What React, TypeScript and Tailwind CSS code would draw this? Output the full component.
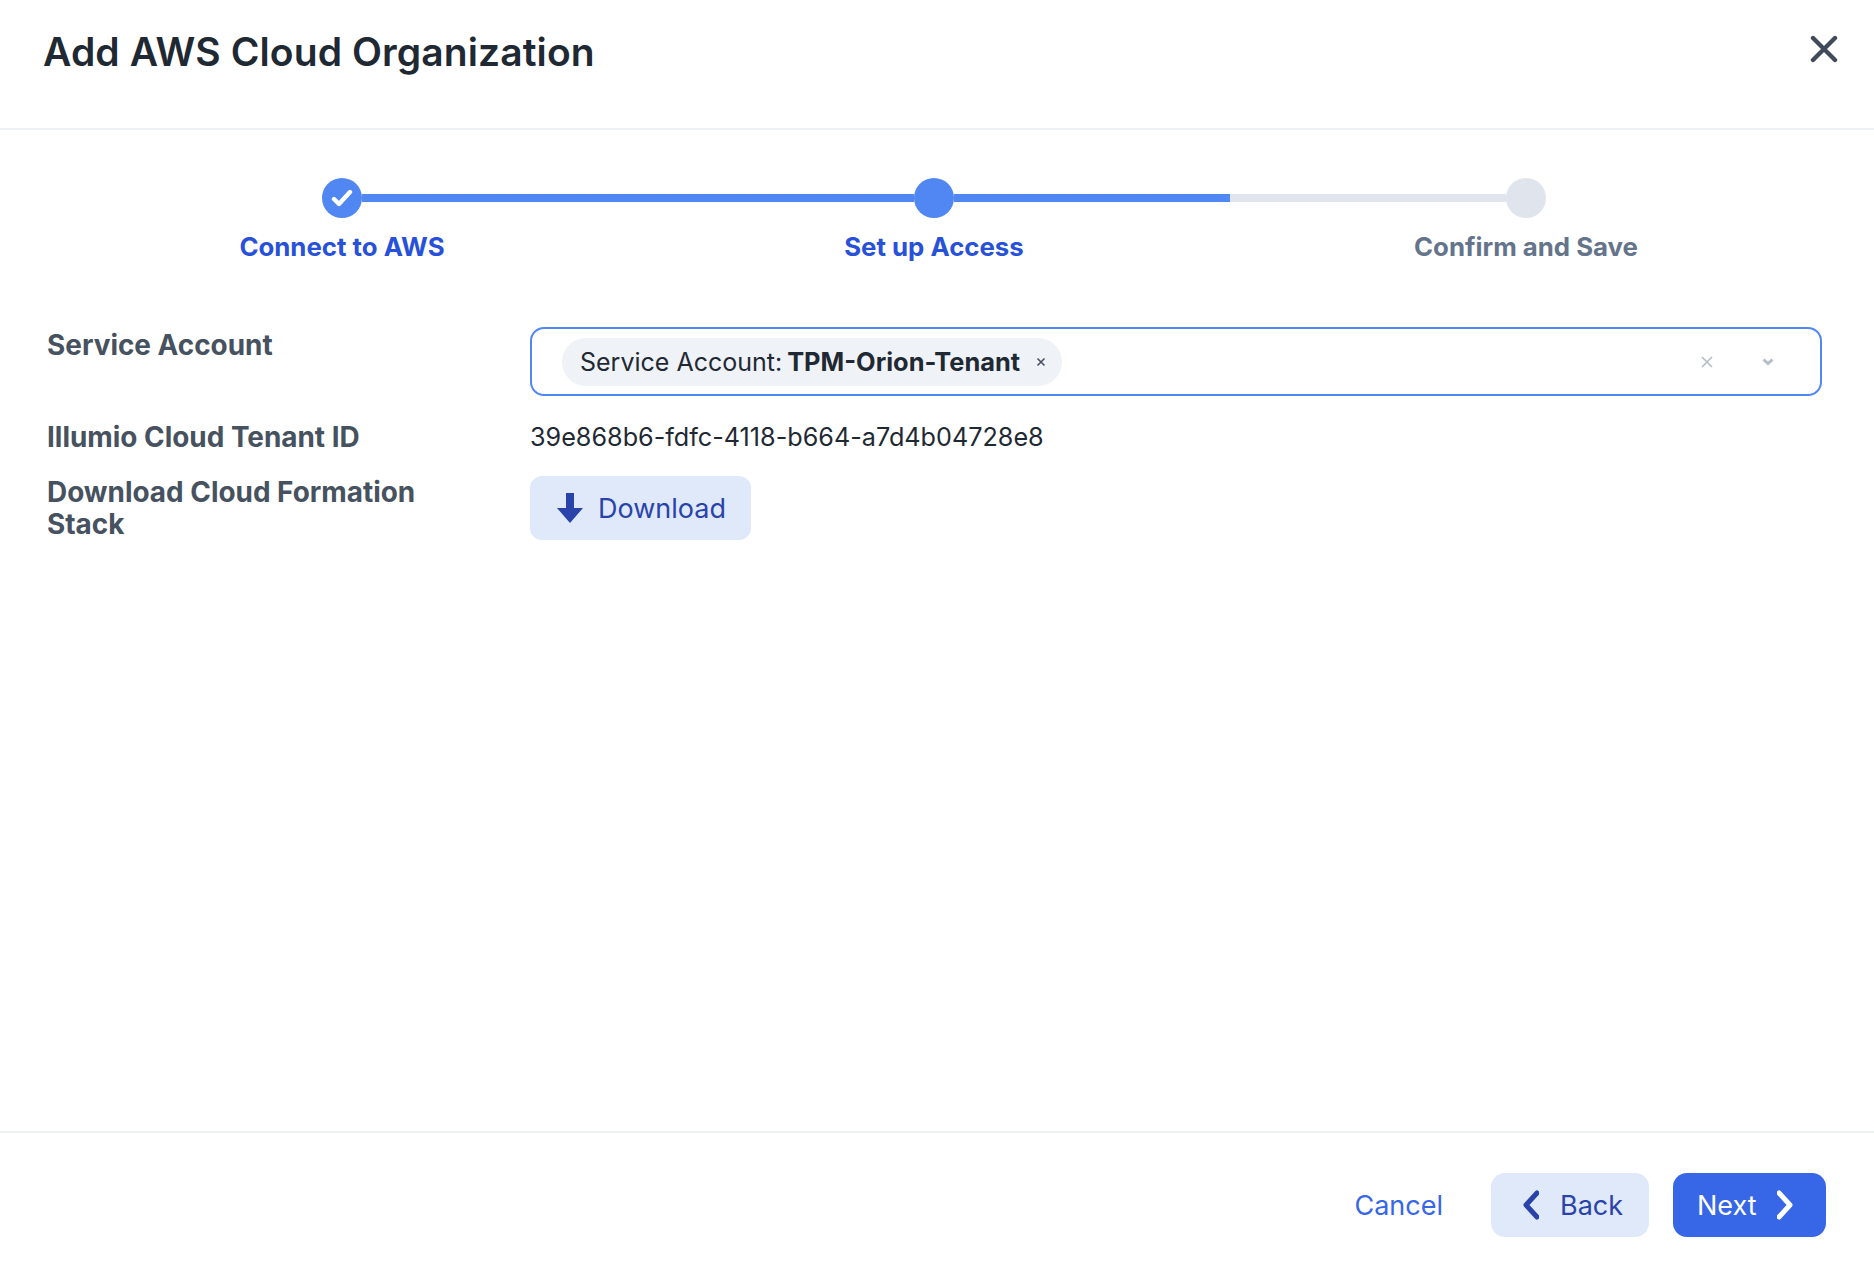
export default function App() {
  return (
    <div className="flex h-[1264px] w-full flex-col bg-white font-['Inter',sans-serif]">
      <header className="flex h-[130px] shrink-0 items-start justify-between border-b-2 border-[#edf0f4] pl-[43px] pr-[36px]">
        <h1 className="mt-[29px] text-[39px] leading-[46px] font-semibold tracking-[0.1px] text-[#1f2933]">Add AWS Cloud Organization</h1>
        <button className="mt-[35px] text-[#3f4b5b]">
          <svg width="28" height="28" viewBox="0 0 28 28" fill="none" stroke="currentColor" strokeWidth="4.4" strokeLinecap="round">
            <path d="M3 3 L25 25 M25 3 L3 25" />
          </svg>
        </button>
      </header>

      <section className="mt-[48px] pl-[46px]">
        <div className="flex items-center pl-[276px]">
          <div className="flex h-10 w-10 items-center justify-center rounded-full bg-[#5087f2]">
            <svg width="22" height="18" viewBox="0 0 22 18" fill="none" stroke="white" strokeWidth="4.4" strokeLinecap="round" strokeLinejoin="round">
              <path d="M3 10 L8 15 L19 3" />
            </svg>
          </div>
          <div className="h-2 w-[552px] bg-[#5087f2]" />
          <div className="h-10 w-10 rounded-full bg-[#5087f2]" />
          <div className="h-2 w-[276px] bg-[#5087f2]" />
          <div className="h-2 w-[276px] bg-[#e0e4ec]" />
          <div className="h-10 w-10 rounded-full bg-[#e0e4ec]" />
        </div>
        <div className="mt-[13px] grid w-[1776px] grid-cols-3 text-center text-[25.8px] leading-[32px] font-bold">
          <div className="text-[#2851d9]">Connect to AWS</div>
          <div className="text-[#2851d9]">Set up Access</div>
          <div className="text-[#64748b]">Confirm and Save</div>
        </div>
      </section>

      <section className="mt-[64px] grid grid-cols-[483px_1292px] items-start pl-[47px] text-[27.9px] leading-[32px]">
        <div className="pt-[2px] font-bold text-[#475260]">Service Account</div>
        <div className="flex h-[69px] items-center rounded-[14px] border-2 border-[#5087f2] pl-[30px] pr-[46px]">
          <div className="flex h-12 items-center rounded-full bg-[#eff2f6] pl-[18px] pr-[16px] text-[25px] text-[#1f2933]">
            <span>Service Account:</span>
            <span className="ml-[5px] text-[25.4px] font-bold">TPM-Orion-Tenant</span>
            <svg className="ml-[16px]" width="10" height="10" viewBox="0 0 10 10" fill="none" stroke="#475260" strokeWidth="1.6">
              <path d="M1.5 1.5 L8.5 8.5 M8.5 1.5 L1.5 8.5" />
            </svg>
          </div>
          <div className="flex-1" />
          <svg width="12" height="12" viewBox="0 0 12 12" fill="none" stroke="#b4bdc9" strokeWidth="1.6">
            <path d="M1 1 L11 11 M11 1 L1 11" />
          </svg>
          <svg className="ml-[49px]" width="12" height="8" viewBox="0 0 12 8" fill="none" stroke="#b4bdc9" strokeWidth="3">
            <path d="M1.5 1.5 L6 5.5 L10.5 1.5" />
          </svg>
        </div>

        <div className="mt-[25px] font-bold text-[#475260]">Illumio Cloud Tenant ID</div>
        <div className="mt-[25px] text-[25.2px] text-[#1f2933]">39e868b6-fdfc-4118-b664-a7d4b04728e8</div>

        <div className="mt-[23px] w-[400px] font-bold text-[#475260]">Download Cloud Formation Stack</div>
        <div className="mt-[23px]">
          <button className="flex h-16 w-[221px] items-center rounded-[12px] bg-[#dfe9fa] pl-[27px] text-[27px] text-[#2a43ab]">
            <svg width="26" height="30" viewBox="0 0 26 30" fill="currentColor">
              <path d="M9 0 H17 V15 H26 L13 30 L0 15 H9 Z" />
            </svg>
            <span className="ml-[15px] pt-[2px]">Download</span>
          </button>
        </div>
      </section>

      <div className="flex-1" />

      <footer className="flex h-[133px] shrink-0 items-start justify-end border-t-2 border-[#edf0f4] pr-[48px] pt-[40px] text-[27px] leading-[32px]">
        <button className="flex h-16 items-center pt-[2px] text-[#3767e6]">Cancel</button>
        <button className="ml-[48px] flex h-16 w-[158px] items-center rounded-[14px] bg-[#dfe9fa] pl-[32px] text-[#2a43ab]">
          <svg width="16" height="30" viewBox="0 0 16 30" fill="none" stroke="currentColor" strokeWidth="5" strokeLinecap="round" strokeLinejoin="round">
            <path d="M14 3 L3 15 L14 27" />
          </svg>
          <span className="ml-[21px] pt-[2px]">Back</span>
        </button>
        <button className="ml-[24px] flex h-16 w-[153px] items-center rounded-[14px] bg-[#3767e6] pl-[24px] text-white">
          <span className="pt-[2px]">Next</span>
          <svg className="ml-[20px]" width="16" height="30" viewBox="0 0 16 30" fill="none" stroke="currentColor" strokeWidth="5" strokeLinecap="round" strokeLinejoin="round">
            <path d="M2 3 L13 15 L2 27" />
          </svg>
        </button>
      </footer>
    </div>
  );
}
